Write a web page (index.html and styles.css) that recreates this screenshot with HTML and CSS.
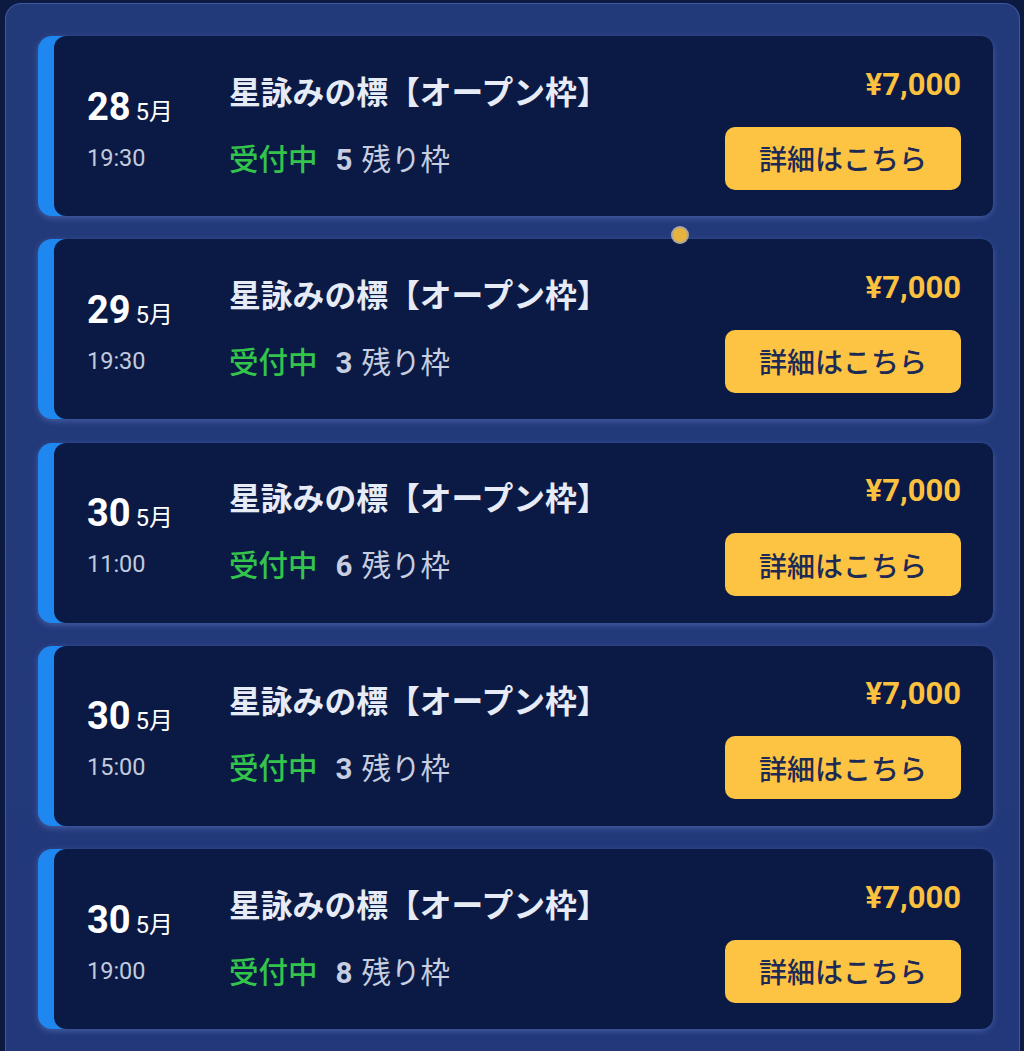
FILE: index.html
```html
<!DOCTYPE html>
<html lang="ja">
<head>
<meta charset="utf-8">
<title>スケジュール</title>
<link rel="stylesheet" href="styles.css">
</head>
<body>
<div class="panel">
  <div class="list">
    <div class="card">
      <div class="card-body">
        <div class="date">
          <div class="day-row"><span class="day">28</span><span class="month">5月</span></div>
          <div class="time">19:30</div>
        </div>
        <div class="main">
          <div class="title">星詠みの標【オープン枠】</div>
          <div class="status"><span class="open">受付中</span><span class="count">5</span><span class="left">残り枠</span></div>
        </div>
        <div class="side">
          <div class="price">¥7,000</div>
          <button class="btn">詳細はこちら</button>
        </div>
      </div>
    </div>
    <div class="card">
      <div class="card-body">
        <div class="date">
          <div class="day-row"><span class="day">29</span><span class="month">5月</span></div>
          <div class="time">19:30</div>
        </div>
        <div class="main">
          <div class="title">星詠みの標【オープン枠】</div>
          <div class="status"><span class="open">受付中</span><span class="count">3</span><span class="left">残り枠</span></div>
        </div>
        <div class="side">
          <div class="price">¥7,000</div>
          <button class="btn">詳細はこちら</button>
        </div>
      </div>
    </div>
    <div class="card">
      <div class="card-body">
        <div class="date">
          <div class="day-row"><span class="day">30</span><span class="month">5月</span></div>
          <div class="time">11:00</div>
        </div>
        <div class="main">
          <div class="title">星詠みの標【オープン枠】</div>
          <div class="status"><span class="open">受付中</span><span class="count">6</span><span class="left">残り枠</span></div>
        </div>
        <div class="side">
          <div class="price">¥7,000</div>
          <button class="btn">詳細はこちら</button>
        </div>
      </div>
    </div>
    <div class="card">
      <div class="card-body">
        <div class="date">
          <div class="day-row"><span class="day">30</span><span class="month">5月</span></div>
          <div class="time">15:00</div>
        </div>
        <div class="main">
          <div class="title">星詠みの標【オープン枠】</div>
          <div class="status"><span class="open">受付中</span><span class="count">3</span><span class="left">残り枠</span></div>
        </div>
        <div class="side">
          <div class="price">¥7,000</div>
          <button class="btn">詳細はこちら</button>
        </div>
      </div>
    </div>
    <div class="card">
      <div class="card-body">
        <div class="date">
          <div class="day-row"><span class="day">30</span><span class="month">5月</span></div>
          <div class="time">19:00</div>
        </div>
        <div class="main">
          <div class="title">星詠みの標【オープン枠】</div>
          <div class="status"><span class="open">受付中</span><span class="count">8</span><span class="left">残り枠</span></div>
        </div>
        <div class="side">
          <div class="price">¥7,000</div>
          <button class="btn">詳細はこちら</button>
        </div>
      </div>
    </div>
  </div>
  <span class="dot"></span>
</div>
</body>
</html>
```

FILE: styles.css
```css
html, body {
  margin: 0;
  padding: 0;
}
body {
  background: #0c1a42;
  font-family: Roboto, "Noto Sans CJK JP", sans-serif;
  height: 1051px;
  overflow: hidden;
}
.panel {
  position: relative;
  margin: 3px 4px 0 5px;
  height: 1080px;
  box-sizing: border-box;
  border: 1px solid rgba(120, 150, 220, 0.35);
  border-radius: 16px;
  background: linear-gradient(180deg, #233a7a 0%, #22387a 100%);
  padding: 32px 26px 0 32px;
}
.list {
  display: flex;
  flex-direction: column;
  gap: 23.25px;
}
.card {
  background: #1f87f0;
  border-radius: 14px;
  padding-left: 16px;
  box-shadow: 0 2px 6px rgba(110, 140, 215, 0.45);
}
.card-body {
  background: #0b1a45;
  border-radius: 12px;
  height: 180px;
  box-sizing: border-box;
  padding: 0 32px 0 33px;
  display: grid;
  grid-template-columns: 142px 1fr auto;
  align-items: center;
}
.date {
  display: flex;
  flex-direction: column;
  margin-top: 6px;
}
.day-row {
  display: flex;
  align-items: baseline;
  line-height: 40px;
}
.day {
  font-size: 38px;
  font-weight: 700;
  color: #ffffff;
  margin-right: 5px;
}
.month {
  font-size: 24px;
  color: #ffffff;
}
.time {
  font-size: 23.5px;
  color: #c2cadd;
  line-height: 28px;
  margin-top: 12px;
}
.main {
  display: flex;
  flex-direction: column;
  gap: 31px;
}
.title {
  font-size: 31.8px;
  font-weight: 700;
  color: #e6ebf5;
  line-height: 36px;
}
.status {
  font-size: 29.5px;
  line-height: 36px;
  display: flex;
  align-items: baseline;
}
.open {
  color: #33c44c;
  font-weight: 500;
  margin-right: 18px;
}
.count {
  color: #c6cee0;
  font-weight: 700;
  margin-right: 9px;
}
.left {
  color: #c6cee0;
}
.side {
  display: flex;
  flex-direction: column;
  align-items: flex-end;
  margin-top: 5px;
}
.price {
  font-size: 31px;
  font-weight: 700;
  color: #fcc23f;
  line-height: 34px;
  margin-bottom: 25px;
}
.btn {
  width: 236px;
  height: 63px;
  border: none;
  border-radius: 10px;
  background: #fdc342;
  color: #1d2a55;
  font-family: Roboto, "Noto Sans CJK JP", sans-serif;
  font-size: 28px;
  font-weight: 500;
  padding: 0;
}
.dot {
  position: absolute;
  left: 665px;
  top: 222px;
  width: 14px;
  height: 14px;
  border-radius: 50%;
  background: #e6b33e;
  border: 2px solid rgba(150, 160, 200, 0.7);
}
```
